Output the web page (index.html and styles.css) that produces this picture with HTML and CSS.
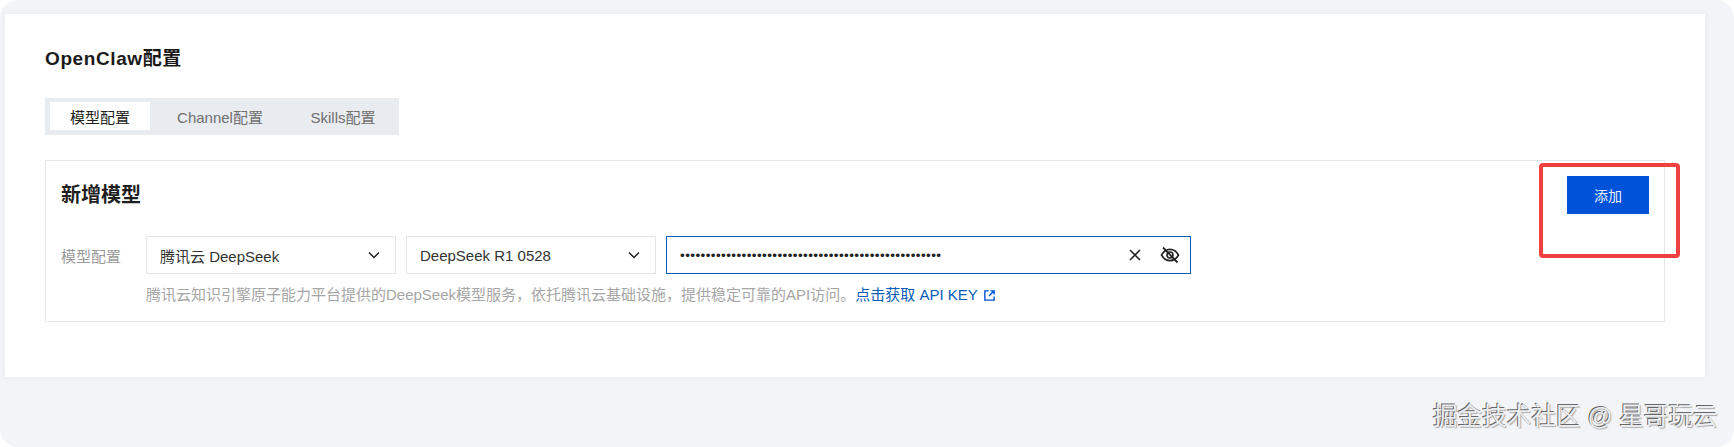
FILE: index.html
```html
<!DOCTYPE html>
<html lang="zh-CN">
<head>
<meta charset="utf-8">
<title>OpenClaw配置</title>
<link rel="stylesheet" href="styles.css">
</head>
<body>
<div class="page">
  <main class="card">
    <h1 class="title">OpenClaw配置</h1>
    <div class="tabs">
      <div class="tab tab-active">模型配置</div>
      <div class="tab tab-channel">Channel配置</div>
      <div class="tab tab-skills">Skills配置</div>
    </div>
    <section class="section">
      <div class="section-head">
        <h2 class="section-title">新增模型</h2>
        <button class="add-btn">添加</button>
      </div>
      <div class="form-row">
        <span class="label">模型配置</span>
        <div class="field field-a">
          <span class="value">腾讯云 DeepSeek</span>
          <svg class="chev" viewBox="0 0 16 16"><path d="M3 5.500l5 5 5-5" fill="none" stroke="#222" stroke-width="1.500"/></svg>
        </div>
        <div class="field field-b">
          <span class="value">DeepSeek R1 0528</span>
          <svg class="chev" viewBox="0 0 16 16"><path d="M3 5.500l5 5 5-5" fill="none" stroke="#222" stroke-width="1.500"/></svg>
        </div>
        <div class="field field-key">
          <span class="dots">•••••••••••••••••••••••••••••••••••••••••••••••••••</span>
          <svg class="icon-x" viewBox="0 0 16 16"><path d="M3 3l10 10M13 3L3 13" fill="none" stroke="#222" stroke-width="1.600"/></svg>
          <svg class="icon-eye" viewBox="0 0 20 20"><path d="M1.500 10C3.600 6.200 6.500 4.400 10 4.400s6.400 1.800 8.500 5.600c-2.100 3.800-5 5.600-8.500 5.600S3.600 13.800 1.500 10z" fill="none" stroke="#222" stroke-width="1.600"/><circle cx="10" cy="10" r="3" fill="none" stroke="#222" stroke-width="1.600"/><path d="M3 2.500l14.500 15" fill="none" stroke="#222" stroke-width="1.800"/></svg>
        </div>
      </div>
      <p class="hint">腾讯云知识引擎原子能力平台提供的DeepSeek模型服务，依托腾讯云基础设施，提供稳定可靠的API访问。<a class="link">点击获取 API KEY<svg class="icon-ext" viewBox="0 0 14 14"><path d="M6 2H2v10h10V8M8 2h4v4M12 2L6.500 7.500" fill="none" stroke="#0052d9" stroke-width="1.500"/></svg></a></p>
    </section>
  </main>
  <div class="highlight"></div>
  <div class="watermark">掘金技术社区 @ 星哥玩云</div>
</div>
</body>
</html>
```
FILE: styles.css
```css
* { box-sizing: border-box; }
html, body { margin: 0; padding: 0; background: #fff; }
body { font-family: "Liberation Sans", "Noto Sans CJK SC", sans-serif; }
.page {
  position: relative;
  width: 1734px;
  height: 447px;
  background: #f3f4f8;
  border-radius: 18px;
  padding: 14px 29px 0 5px;
}
.card {
  height: 363px;
  background: #fff;
  box-shadow: 0 0 6px rgba(0, 20, 60, 0.06);
  padding: 31px 40px 0 40px;
}
.title {
  margin: 0;
  font-size: 19px;
  line-height: 28px;
  font-weight: 700;
  color: #1a1a1a;
  letter-spacing: 0.6px;
}
.tabs {
  display: flex;
  width: 354px;
  height: 37px;
  margin-top: 25px;
  padding: 4px 3px 5px 5px;
  background: #e8ebf0;
}
.tab {
  display: flex;
  align-items: center;
  justify-content: center;
  font-size: 15px;
  color: #707070;
}
.tab-active { width: 100px; background: #fff; color: #222; }
.tab-channel { width: 140px; }
.tab-skills { width: 106px; }
.section {
  height: 162px;
  margin-top: 25px;
  border: 1px solid #e6e8ec;
  padding: 15px 15px 0;
}
.section-head {
  display: flex;
  justify-content: space-between;
  height: 60px;
}
.section-title {
  margin: 5px 0 0;
  font-size: 20px;
  line-height: 28px;
  font-weight: 700;
  color: #1f1f1f;
}
.add-btn {
  width: 82px;
  height: 38px;
  border: 0;
  background: #0052d9;
  color: #e8f0ff;
  font: 14px "Liberation Sans", "Noto Sans CJK SC", sans-serif;
}
.form-row {
  display: flex;
  align-items: center;
  gap: 10px;
}
.label {
  width: 75px;
  font-size: 15px;
  color: #9a9a9a;
}
.field {
  display: flex;
  align-items: center;
  height: 38px;
  background: #fff;
  border: 1px solid #e4e6ea;
  padding: 0 13px;
  font-size: 15px;
  color: #333;
}
.field-a, .field-b { width: 250px; }
.field-key { width: 525px; border-color: #0a5cb8; }
.value { flex: 1; }
.dots { flex: 1; font-size: 13.500px; letter-spacing: 0.4px; color: #222; }
.chev { width: 16px; height: 16px; flex: none; }
.icon-x { width: 16px; height: 16px; flex: none; margin-right: 17px; }
.icon-eye { width: 20px; height: 20px; flex: none; margin-right: -3px; }
.hint {
  margin: 11px 0 0 85px;
  font-size: 15px;
  line-height: 20px;
  color: #a6a6a6;
}
.link { color: #0a5cb8; }
.icon-ext { width: 13px; height: 13px; margin-left: 5px; vertical-align: -2px; }
.highlight {
  position: absolute;
  left: 1539px;
  top: 163px;
  width: 141px;
  height: 95px;
  border: 4px solid #f04040;
  border-radius: 4px;
}
.watermark {
  position: absolute;
  left: 1433px;
  top: 402px;
  font-size: 24.600px;
  line-height: 30px;
  white-space: nowrap;
  color: #eceef2;
  text-shadow: -1px -1px 0 #666, 1px 1px 1px #aaa;
}
```
